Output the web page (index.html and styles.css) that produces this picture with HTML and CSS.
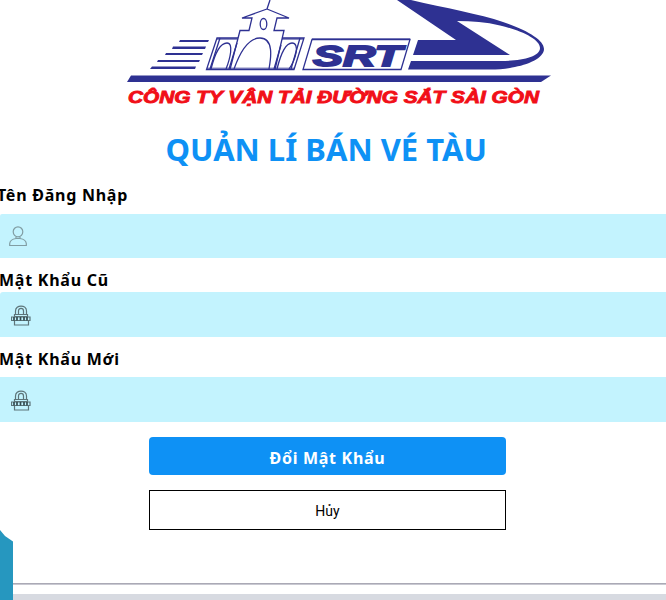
FILE: index.html
```html
<!DOCTYPE html>
<html lang="vi">
<head>
<meta charset="utf-8">
<title>Quản lí bán vé tàu</title>
<link rel="stylesheet" href="styles.css">
</head>
<body>
<svg class="symbols" width="0" height="0">
  <symbol id="lock" viewBox="0 0 20 21">
    <g fill="none" stroke="#5d7479" stroke-width="1.200">
      <path d="M4.500 9V6C4.500-.5 15.500-.5 15.500 6V9"/>
      <path d="M7.500 9V6C7.500 2.500 12.500 2.500 12.500 6V9"/>
      <path d="M3.500 9.500h13v2h-13zM.5 12h18.500v3.500H.5zM3.500 16v4h14V16" />
    </g>
    <path d="M3 12v3.500M6 12v3.500M9.500 12v3.500M13 12v3.500M16 12v3.500" stroke="#344b50" stroke-width="1.700"/>
  </symbol>
</svg>
<main class="page">
  <svg class="logo" viewBox="0 0 666 110">
    <g fill="#2e3192">
      <path d="M180 40h29l-1 2h-29zM173 46.500h33l-1 2.500h-33zM166 53h37l-1 2h-37zM158 60h42l-1 2h-42zM152 66.500h44l-1 2.500h-45z"/>
      <path d="M131 75.500H551L541 82H127z"/>
      <path d="M397 0H411C445 8 480 14 503 22C527 30 544 40 544 49C544 58 528 65 512 67.500C505 69 498 69.500 490 69.500H408L411 61H500C521 61 540 57 540 48C540 39 520 30 500 25.500C486 22 472 21 457 21L510 55H413L418 40H456Z"/>
    </g>
    <g fill="none" stroke="#2e3192" stroke-width="1.300">
      <path d="M270 0L267 9M267 9L242 18H252L249 30.500H240L230 69.500M267 9L289 18H277L274 30.500H284L275 69.500"/>
      <path d="M238 38H217L206.500 69.500H294L304 38H282"/>
      <path d="M220 38L210 69M237 43L229 69M281 45L274 69M300 38L291 69"/>
      <path d="M211 69C215 53 220 43 227 43C234 43 230 59 226 69"/>
      <path d="M234 69C240 52 249 38 260 38C274 38 271 58 269 69"/>
      <path d="M277 69C281 53 286 43 292 43C300 43 296 59 289 69"/>
      <ellipse cx="263.500" cy="24" rx="3.300" ry="5.500"/>
      <path d="M312 39.500H410L401 69.500H303Z"/>
    </g>
    <path d="M217 39h20M282 39h21M207 68.500h87M312 39h98" stroke="#2e3192" stroke-opacity=".55" stroke-width="2"/>
    <text class="logo-mark" x="313" y="65.500" textLength="89" lengthAdjust="spacingAndGlyphs">SRT</text>
    <text class="logo-name" x="128" y="103" textLength="411" lengthAdjust="spacingAndGlyphs">CÔNG TY VẬN TẢI ĐƯỜNG SẮT SÀI GÒN</text>
  </svg>
  <h1 class="title">QUẢN LÍ BÁN VÉ TÀU</h1>
  <form class="form">
    <label class="label label-user">Tên Đăng Nhập</label>
    <div class="field field-user">
      <svg class="user" viewBox="0 0 18 21"><g fill="none" stroke="#819da3" stroke-width="1.200"><ellipse cx="9" cy="5.800" rx="4.800" ry="5"/><path d="M7 11v1.500h4V11M.7 19.500v-2C1 14.500 4 13 7 12.500h4c3 .5 6 2 6.300 5v2z"/></g></svg>
    </div>
    <label class="label label-old">Mật Khẩu Cũ</label>
    <div class="field field-old"><svg class="lock"><use href="#lock"/></svg></div>
    <label class="label label-new">Mật Khẩu Mới</label>
    <div class="field field-new"><svg class="lock"><use href="#lock"/></svg></div>
    <button class="submit" type="button">Đổi Mật Khẩu</button>
    <button class="cancel" type="button">Hủy</button>
  </form>
  <svg class="footer" viewBox="0 0 666 72">
    <path d="M13 55h653v1H13z" fill="#aaa9b5"/>
    <path d="M13 56h653v1H13z" fill="#c9c9d2"/>
    <path d="M13 66h653v6H13z" fill="#d7dae1"/>
    <path d="M0 2L5 8L13 13.500V72H0z" fill="#2697bf"/>
  </svg>
</main>
</body>
</html>
```

FILE: styles.css
```css
* { box-sizing: border-box; }
body { margin: 0; background: #fff; overflow: hidden; font-family: "Noto Sans", "Open Sans", sans-serif; }
.symbols { display: block; }
.page { width: 666px; height: 600px; display: flex; flex-direction: column; overflow: hidden; }
.logo { width: 666px; height: 110px; flex: none; }
.logo-mark { font: italic bold 29px "Liberation Sans", sans-serif; fill: #2e3192; stroke: #2e3192; stroke-width: 1.8px; }
.logo-name { font: italic bold 17px "Liberation Sans", sans-serif; fill: #f10f18; stroke: #f10f18; stroke-width: .9px; }
.title { margin: 19px 0 1px 165.5px; height: 41px; font-size: 31px; line-height: 41px; font-weight: 700; color: #0e91f5; white-space: nowrap; }
.form { display: flex; flex-direction: column; height: 357px; }
.label { height: 24px; line-height: 24px; font-size: 16px; font-weight: 700; letter-spacing: .75px; color: #000; white-space: nowrap; }
.label-user { margin: 12px 0 0 -3px; }
.label-old { margin: 10px 0 0 -1px; }
.label-new { margin: 10px 0 0 -1px; }
.field { display: flex; align-items: center; background: #c3f3fe; flex: none; }
.field-user { height: 44px; margin-top: 7px; padding-left: 9px; border-radius: 2px 0 0 0; }
.field-old { height: 45px; padding: 1px 0 0 11px; border-radius: 3px 0 0 0; }
.field-new { height: 45px; margin-top: 6px; padding: 1px 0 0 11px; }
.user { width: 18px; height: 21px; }
.lock { width: 20px; height: 21px; }
.submit, .cancel { width: 357px; margin-left: 149px; padding: 0; flex: none; }
.submit { height: 38px; margin-top: 15px; border: 0; border-radius: 4px; background: #0e91f5; color: #fff; font: bold 16px "Noto Sans", sans-serif; letter-spacing: .7px; padding-top: 3px; }
.cancel { height: 40px; margin-top: 15px; border: 1px solid #000; background: #fff; color: #000; font: 14px Roboto, sans-serif; padding-top: 1px; }
.footer { width: 666px; height: 72px; flex: none; }
```
